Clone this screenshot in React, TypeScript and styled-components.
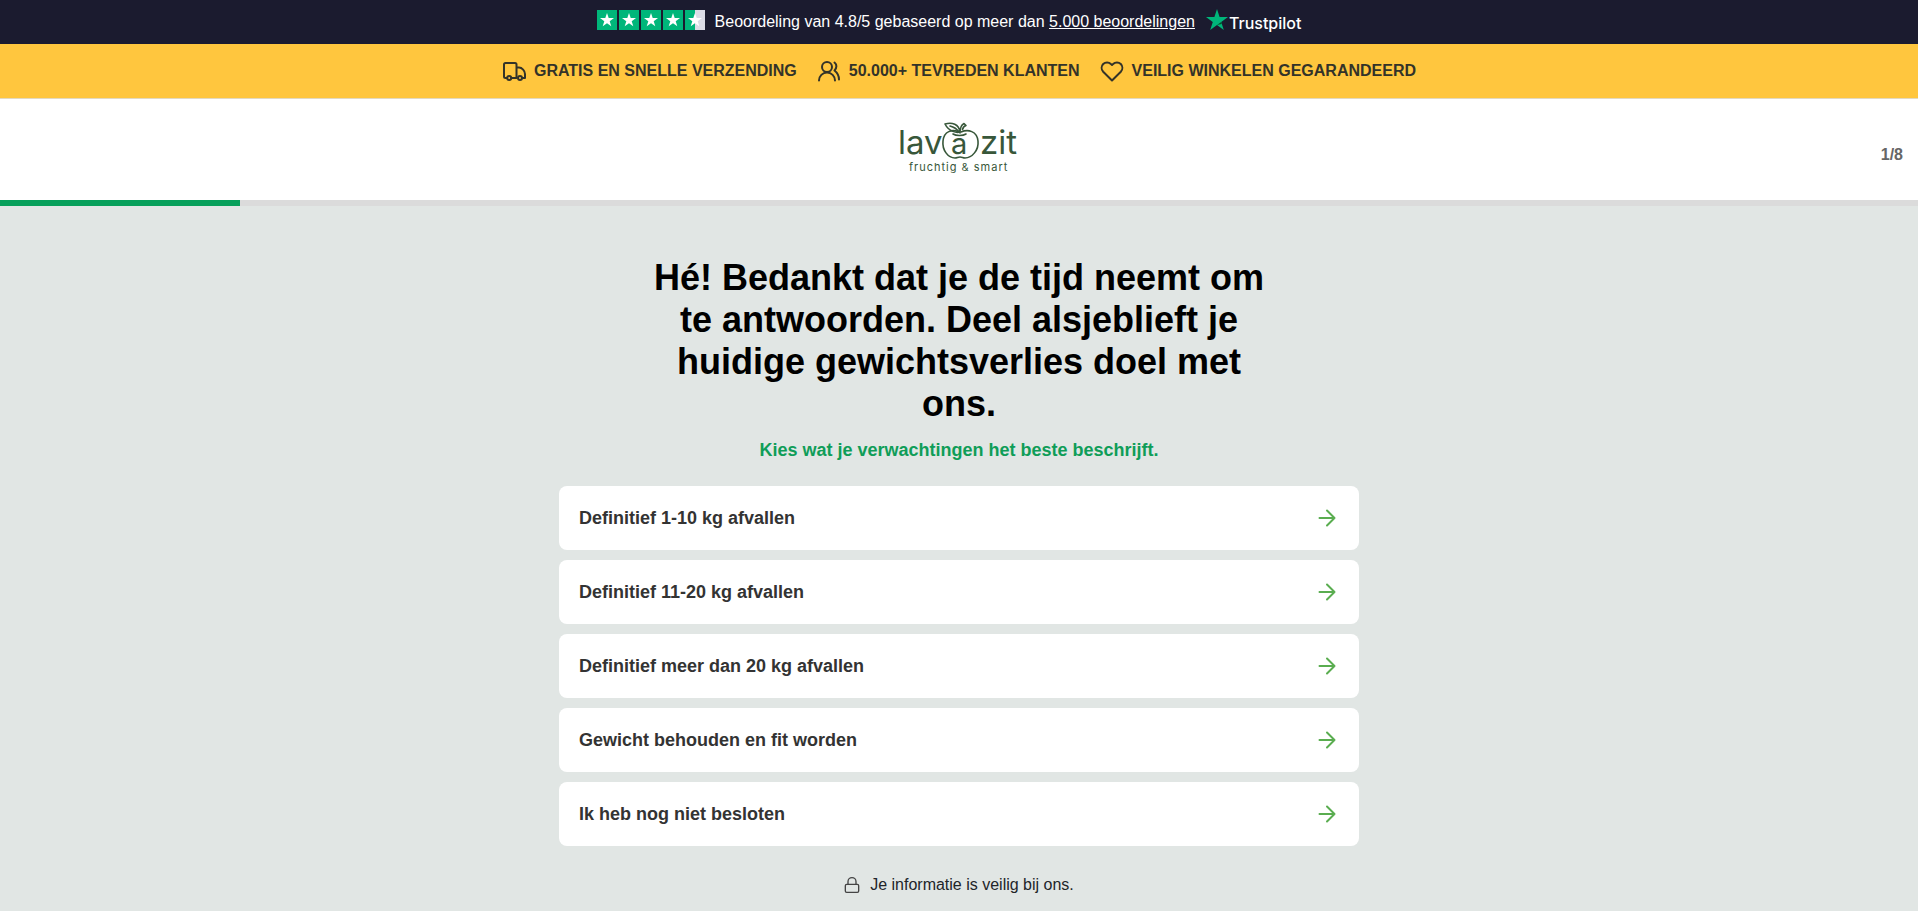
import React from "react";
import styled, { createGlobalStyle } from "styled-components";

const GlobalStyle = createGlobalStyle`
  * { box-sizing: border-box; }
  body {
    margin: 0;
    background: #e1e6e4;
    color: #212529;
    font-family: "Liberation Sans", Arial, sans-serif;
    font-size: 16px;
    line-height: 24px;
  }
`;

const ReviewBar = styled.div`
  display: flex;
  align-items: center;
  justify-content: center;
  gap: 10px;
  min-height: 44px;
  padding-right: 20px;
  background: #1b1b2f;
  color: #fff;

  svg { margin-bottom: 4px; }
`;

const ReviewLink = styled.a`
  color: inherit;
  text-decoration: underline;
`;

const TrustLogo = styled.span`
  display: inline-flex;
  align-items: center;
  color: #fff;
`;

const TrustName = styled.span`
  padding-top: 2px;
  font-family: Inter, "Liberation Sans", sans-serif;
  font-size: 16px;
  font-weight: 500;
`;

const UspBar = styled.ul`
  display: flex;
  align-items: center;
  justify-content: center;
  gap: 20px;
  margin: 0;
  padding: 15px 0;
  list-style: none;
  background: #ffc63e;
  border-bottom: 1px solid #e3d9c0;
  color: #333329;
  font-weight: 700;
`;

const UspItem = styled.li`
  display: flex;
  align-items: center;
  gap: 8px;
`;

const Header = styled.header`
  display: grid;
  grid-template-columns: 1fr auto 1fr;
  align-items: center;
  padding: 16px 15px 20px;
  background: #fff;
`;

const LogoLink = styled.a`
  grid-column: 2;
  display: block;
  height: 65px;
`;

const StepCount = styled.span`
  justify-self: end;
  padding-top: 14px;
  color: #666;
  font-weight: 700;
`;

const ProgressTrack = styled.div`
  height: 6px;
  background: #dbdbdb;
`;

const ProgressFill = styled.div`
  height: 100%;
  background: #07a05b;
`;

const Quiz = styled.main`
  display: flex;
  flex-direction: column;
  align-items: center;
  max-width: 800px;
  margin: 0 auto;
  padding-top: 51px;
`;

const Title = styled.h1`
  max-width: 640px;
  margin: 0;
  color: #000;
  font-size: 36px;
  line-height: 42px;
  text-align: center;
`;

const Subtitle = styled.p`
  margin: 13px 0 24px;
  color: #0f9d58;
  font-size: 18px;
  font-weight: 700;
`;

const Options = styled.div`
  display: flex;
  flex-direction: column;
  gap: 10px;
  width: 100%;
`;

const Option = styled.button`
  display: flex;
  align-items: center;
  justify-content: space-between;
  width: 100%;
  padding: 20px;
  border: 0;
  border-radius: 8px;
  background: #fff;
  color: #333;
  font: 700 18px/24px "Liberation Sans", Arial, sans-serif;
  text-align: left;
  cursor: pointer;
`;

const Privacy = styled.p`
  display: flex;
  align-items: center;
  gap: 10px;
  margin: 27px 0 0;
`;

const STAR = "M10 3l1.7 5.1h5.3l-4.3 3.1 1.6 5.1L10 13.2l-4.3 3.1 1.6-5.1L3 8.1h5.3z";

const Stars = () => (
  <svg width="108" height="20" viewBox="0 0 108 20" role="img" aria-label="4.8 van 5 sterren">
    {[0, 1, 2, 3, 4].map((i) => (
      <g key={i} transform={`translate(${i * 22} 0)`}>
        <rect width="20" height="20" fill={i === 4 ? "#dcdce6" : "#00b67a"} />
        {i === 4 && <rect width="10" height="20" fill="#00b67a" />}
        <path d={STAR} fill="#fff" />
      </g>
    ))}
  </svg>
);

const TrustStar = () => (
  <svg width="24" height="24" viewBox="0 0 24 24" aria-hidden="true">
    <path d="M12 1l2.6 8H23l-6.8 5 2.6 8-6.8-5-6.8 5 2.6-8L1 9h8.4z" fill="#00b67a" />
    <path d="M16.2 14l.6 1.9L12 17z" fill="#005128" />
  </svg>
);

const LineIcon = ({ size = 24, width = 2, color = "currentColor", children }: {
  size?: number; width?: number; color?: string; children: React.ReactNode;
}) => (
  <svg width={size} height={size} viewBox="0 0 24 24" fill="none" stroke={color}
    strokeWidth={width} strokeLinecap="round" strokeLinejoin="round" aria-hidden="true">
    {children}
  </svg>
);

const Truck = () => (
  <LineIcon>
    <path d="M5 19H3.500A1.500 1.500 0 0 1 2 17.500V5.500A1.500 1.500 0 0 1 3.500 4h9.500a1.500 1.500 0 0 1 1.500 1.500V19H9.500M14.500 8.500h2.500c3 0 6 3.500 6 6.500v4h-2.500" />
    <circle cx="7.200" cy="19" r="2" />
    <circle cx="18" cy="19" r="2" />
  </LineIcon>
);

const Users = () => (
  <LineIcon>
    <circle cx="10" cy="8" r="5" />
    <path d="M2 21.500a8 8 0 0 1 16 0" />
    <path d="M17.500 3.500c2.500 2 2.500 5.500 0 8 2.500 2 4.500 5 4.500 9" />
  </LineIcon>
);

const Heart = () => (
  <LineIcon>
    <path d="M12 21.500L3.200 12.700a5.600 5.600 0 0 1 0-7.700 5.500 5.500 0 0 1 7.700 0L12 6l1.100-1a5.500 5.500 0 0 1 7.700 0 5.600 5.600 0 0 1 0 7.700z" />
  </LineIcon>
);

const Arrow = () => (
  <LineIcon color="#5aad50">
    <path d="M4.500 12h15M12 4.500l7.500 7.500-7.500 7.500" />
  </LineIcon>
);

const Lock = () => (
  <LineIcon size={16} width={2} color="#444">
    <rect x="2" y="11" width="20" height="12" rx="2" />
    <path d="M6 11V7a6 6 0 0 1 12 0v4" />
  </LineIcon>
);

const Logo = () => (
  <svg width="120" height="65" viewBox="0 0 120 65" role="img" aria-label="lavazit fruchtig &amp; smart">
    <g fill="#38573a" fontFamily="Inter, sans-serif">
      <text x="-1" y="39" fontSize="33">lav</text>
      <text x="52" y="39" fontSize="29">a</text>
      <text x="81" y="39" fontSize="33">zit</text>
      <text x="10" y="56" fontSize="11" letterSpacing="1">fruchtig &amp; smart</text>
    </g>
    <g fill="none" stroke="#38573a" strokeWidth="1.600" strokeLinecap="round" strokeLinejoin="round">
      <path d="M60 17c-7-3-15-1-16 9-1 9 5 17 12 17 2 0 3-1 5-1s3 1 5 1c7 0 14-8 13-17-1-10-10-12-17-9" />
      <path d="M61 18c0-4 1-8 4-9.500l2 2c-2 .5-3 2-3.500 4M61 17c-3 1-11 0-15-8 7-2 14 0 15 8zM51 11c4 1 7 3 9 6M54 19c3 2 10 2 13 0" />
    </g>
  </svg>
);

const OPTIONS = [
  "Definitief 1-10 kg afvallen",
  "Definitief 11-20 kg afvallen",
  "Definitief meer dan 20 kg afvallen",
  "Gewicht behouden en fit worden",
  "Ik heb nog niet besloten",
];

export default function App() {
  const step = 1;
  const steps = 8;
  return (
    <>
      <GlobalStyle />
      <ReviewBar>
        <Stars />
        <span>
          Beoordeling van 4.8/5 gebaseerd op meer dan <ReviewLink href="#reviews">5.000 beoordelingen</ReviewLink>
        </span>
        <TrustLogo><TrustStar /><TrustName>Trustpilot</TrustName></TrustLogo>
      </ReviewBar>
      <UspBar>
        <UspItem><Truck />GRATIS EN SNELLE VERZENDING</UspItem>
        <UspItem><Users />50.000+ TEVREDEN KLANTEN</UspItem>
        <UspItem><Heart />VEILIG WINKELEN GEGARANDEERD</UspItem>
      </UspBar>
      <Header>
        <LogoLink href="#home"><Logo /></LogoLink>
        <StepCount>{step}/{steps}</StepCount>
      </Header>
      <ProgressTrack>
        <ProgressFill style={{ width: `${(step / steps) * 100}%` }} />
      </ProgressTrack>
      <Quiz>
        <Title>Hé! Bedankt dat je de tijd neemt om te antwoorden. Deel alsjeblieft je huidige gewichtsverlies doel met ons.</Title>
        <Subtitle>Kies wat je verwachtingen het beste beschrijft.</Subtitle>
        <Options>
          {OPTIONS.map((label) => (
            <Option key={label} type="button">{label}<Arrow /></Option>
          ))}
        </Options>
        <Privacy><Lock />Je informatie is veilig bij ons.</Privacy>
      </Quiz>
    </>
  );
}
